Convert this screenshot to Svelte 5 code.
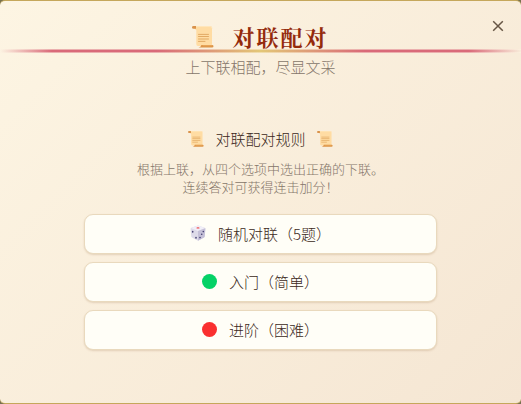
<script>
  let { onclose = () => {}, onselect = () => {} } = $props();

  const modes = [
    { id: 'random', icon: 'dice', label: '随机对联（5题）' },
    { id: 'easy', icon: 'green', label: '入门（简单）' },
    { id: 'hard', icon: 'red', label: '进阶（困难）' }
  ];
</script>

{#snippet scroll()}
  <svg class="scroll" viewBox="0 0 22 22" aria-hidden="true">
    <path d="M2 0h16q2 0 2 2v16.500q0 1.500-1.500 1.500H6q-1.700 0-1.700-2V4L2 2.500z" fill="#ffdca3" />
    <path d="M1.500 0H4v2.800H1.500Q0 2.800 0 1.400T1.500 0z" fill="#d9924b" />
    <path d="M4 0.500h14q2 0 2 2" fill="none" stroke="#ffe6bb" />
    <path d="M6.500 8.400h10M6.500 10.500h10M6.500 13h10M6.500 15.400h6.500" stroke="#dfa45c" stroke-width="0.900" stroke-linecap="round" />
    <path d="M9.500 19h10.500q1.500 0 1.500 1.200T20 21.500H6.500q2.300-.4 3-2.500z" fill="#dd9446" />
    <path d="M10.500 19.700h9.500" stroke="#f0b66b" stroke-width="0.600" />
  </svg>
{/snippet}

<main class="panel">
  <button class="close" type="button" aria-label="关闭" onclick={onclose}>
    <svg viewBox="0 0 12 12" aria-hidden="true">
      <path d="M1.200 1.200l9.600 9.600M10.800 1.200l-9.600 9.600" />
    </svg>
  </button>

  <header>
    <h1>{@render scroll()}<span>对联配对</span></h1>
    <div class="rule"></div>
    <p>上下联相配，尽显文采</p>
  </header>

  <section class="intro">
    <h2>{@render scroll()}<span>对联配对规则</span>{@render scroll()}</h2>
    <p>根据上联，从四个选项中选出正确的下联。</p>
    <p>连续答对可获得连击加分！</p>
  </section>

  <div class="modes">
    {#each modes as mode (mode.id)}
      <button class="mode" type="button" onclick={() => onselect(mode.id)}>
        {#if mode.icon === 'dice'}
          <svg class="dice" viewBox="0 0 16 16" aria-hidden="true">
            <path d="M8 .5l6.700 2.300q.8.400.7 1.300l-.7 7.500q-.1.700-.7 1L8 15.700l-6-3.100q-.6-.3-.7-1L.6 4.100q-.1-.9.700-1.300z" fill="#dedbe9" />
            <path d="M8 .5l7 2.600L8 6 1 3.100z" fill="#f1eff8" />
            <path d="M8 6l7.400-2.700-.7 8.300q-.1.700-.7 1L8 15.700z" fill="#c5c0d8" />
            <ellipse cx="8" cy="2.900" rx="1.600" ry=".7" fill="#ef4444" />
            <g fill="#454071">
              <ellipse cx="2.700" cy="6.800" rx=".8" ry="1" />
              <ellipse cx="6" cy="12.800" rx=".8" ry="1" />
              <circle cx="13.300" cy="6.600" r=".8" />
              <circle cx="11.700" cy="9.300" r=".8" />
              <circle cx="10" cy="12.600" r=".8" />
            </g>
          </svg>
        {:else}
          <i class="dot {mode.icon}"></i>
        {/if}
        <span>{mode.label}</span>
      </button>
    {/each}
  </div>
</main>

<style>
  :global(body) {
    background: #77714f;
  }

  .panel {
    position: relative;
    box-sizing: border-box;
    min-height: 100vh;
    padding-top: 24px;
    border: solid #c5a75b;
    border-width: 1px 0;
    border-radius: 5px;
    background: linear-gradient(135deg, #fdf5e3, #f5e6d3);
    color: #3b2820;
    font-family: "Noto Sans CJK SC", sans-serif;
    font-size: 15px;
    font-weight: 300;
    text-align: center;
  }

  h1, h2, p {
    margin: 0;
  }

  h1, h2, .mode {
    display: flex;
    align-items: center;
    justify-content: center;
  }

  h1 {
    gap: 18px;
    color: #942a0c;
    font-family: "Noto Serif CJK SC", "Noto Sans CJK SC", serif;
    font-size: 22px;
    font-weight: 700;
    line-height: 24px;
    letter-spacing: 2px;
  }

  h1 .scroll {
    width: 22px;
    height: 22px;
  }

  .rule {
    height: 4px;
    background:
      linear-gradient(rgba(253, 243, 226, 0.5) 1px, transparent 1px 3px, rgba(253, 243, 226, 0.5) 3px),
      linear-gradient(90deg, transparent, #d96a79 10%, #d96a79 30%, #e3c777 50%, #d96a79 70%, #d96a79 90%, transparent);
  }

  header p {
    color: #85766a;
    line-height: 28px;
  }

  .intro {
    margin-top: 47px;
  }

  h2 {
    gap: 11px;
    margin-bottom: 10px;
    font-size: 15px;
    font-weight: 300;
    line-height: 22px;
  }

  h2 .scroll {
    width: 16px;
    height: 16px;
  }

  .intro p {
    color: #85766a;
    font-size: 13px;
    line-height: 18px;
  }

  .modes {
    display: grid;
    gap: 8px;
    width: calc(100% - 168px);
    margin: 18px auto 0;
  }

  .mode {
    gap: 12px;
    height: 40px;
    padding: 0 0 2px;
    border: 1px solid #e9d9bd;
    border-radius: 9px;
    background: #fffef7;
    box-shadow: 0 1px 2px rgba(139, 90, 43, 0.2);
    color: inherit;
    font: inherit;
    cursor: pointer;
  }

  .dice {
    width: 16px;
    height: 16px;
  }

  .dot {
    width: 15px;
    height: 15px;
    border-radius: 50%;
  }

  .green {
    background: #05d267;
  }

  .red {
    background: #fa3030;
  }

  .close {
    position: absolute;
    top: 13px;
    right: 11px;
    display: grid;
    place-items: center;
    width: 24px;
    height: 24px;
    padding: 0;
    border: 0;
    background: none;
    cursor: pointer;
  }

  .close svg {
    width: 12px;
    height: 12px;
    fill: none;
    stroke: #665544;
    stroke-width: 1.500;
  }
</style>
